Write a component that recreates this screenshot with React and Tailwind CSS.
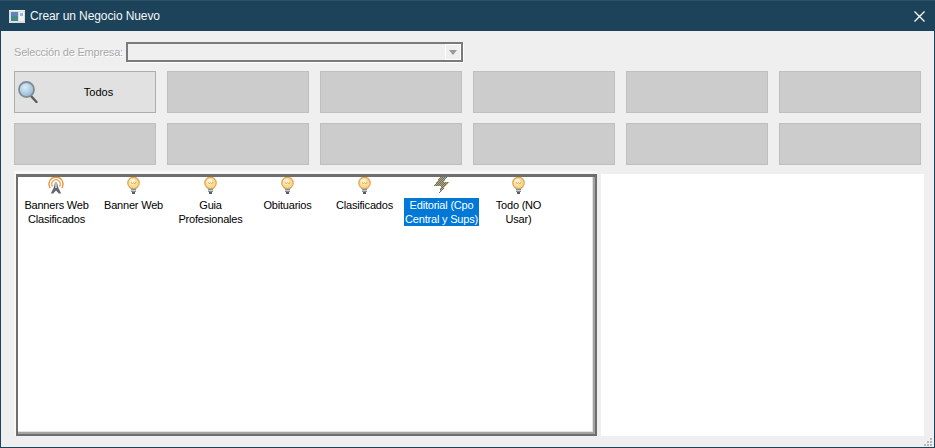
import React from "react";

const items = [
  { icon: "antenna", lines: ["Banners Web", "Clasificados"] },
  { icon: "bulb", lines: ["Banner Web"] },
  { icon: "bulb", lines: ["Guia", "Profesionales"] },
  { icon: "bulb", lines: ["Obituarios"] },
  { icon: "bulb", lines: ["Clasificados"] },
  { icon: "bolt", lines: ["Editorial (Cpo", "Central y Sups)"], selected: true },
  { icon: "bulb", lines: ["Todo (NO", "Usar)"] },
];

function WindowIcon() {
  return (
    <svg width="16" height="13" viewBox="0 0 16 13" shapeRendering="crispEdges">
      <rect width="16" height="13" fill="#dcdcdc" />
      <rect x="2" y="2" width="7" height="9" fill="#3e8c8c" />
      <rect x="2" y="2" width="7" height="4" fill="#5a86ba" />
      <rect x="10" y="2" width="5" height="9" fill="#f2f2f2" />
      <rect x="11" y="3" width="3" height="3" fill="#9ab8d4" />
      <rect width="16" height="1" fill="#f5f5f5" />
    </svg>
  );
}

function Bulb() {
  return (
    <svg width="13" height="17" viewBox="0 0 13 17">
      <circle cx="6.5" cy="6" r="5.7" fill="#fadb94" stroke="#e4a858" strokeWidth="1.300" />
      <circle cx="5.5" cy="4.800" r="3" fill="#fef0cb" />
      <path d="M4 5l1.200 2L6.500 5.500 7.800 7 9 5" fill="none" stroke="#d6a658" strokeWidth="0.800" />
      <rect x="3.500" y="11" width="6" height="1" fill="#d8a860" />
      <rect x="4" y="12" width="5" height="3" fill="#858e9b" />
      <rect x="4" y="13" width="5" height="1" fill="#c4cad2" />
      <rect x="5" y="15" width="3" height="2" fill="#555d68" />
    </svg>
  );
}

function Antenna() {
  return (
    <svg className="-ml-[2px]" width="16" height="17" viewBox="0 0 16 17">
      <path d="M2.200 11a7 7 0 1 1 11.600 0" fill="none" stroke="#ec9433" strokeWidth="1.400" />
      <path d="M4.600 9.500a4.200 4.200 0 1 1 6.800 0" fill="none" stroke="#f0a555" strokeWidth="1.300" />
      <path d="M7 5.500h2l1.200 5 3 6h-2.400L8 13.500 5.200 16.500H2.800l3-6z" fill="#66666e" />
      <rect x="7" y="6" width="2" height="5" fill="#b6b9c2" />
    </svg>
  );
}

function Bolt() {
  return (
    <svg width="15" height="17" viewBox="0 0 15 17" shapeRendering="crispEdges">
      <defs>
        <pattern id="dither" width="2" height="2" patternUnits="userSpaceOnUse">
          <rect width="2" height="2" fill="#f0a020" />
          <rect width="1" height="1" fill="#2f78c0" />
          <rect x="1" y="1" width="1" height="1" fill="#2f78c0" />
        </pattern>
      </defs>
      <polygon points="6,0 13,0 10,5 15,5 5,17 7,9 0,9" fill="url(#dither)" />
    </svg>
  );
}

function Magnifier() {
  return (
    <svg width="20" height="22" viewBox="0 0 20 22">
      <defs>
        <radialGradient id="lens" cx="0.4" cy="0.35" r="0.7">
          <stop offset="0" stopColor="#dcecf8" />
          <stop offset="1" stopColor="#8fb6d6" />
        </radialGradient>
      </defs>
      <path d="M13 15l5.500 6" stroke="#5a5d60" strokeWidth="2.400" strokeLinecap="round" />
      <circle cx="8.500" cy="8.500" r="7.500" fill="url(#lens)" stroke="#7f8c94" strokeWidth="1.800" />
    </svg>
  );
}

function ListIcon({ name }) {
  if (name === "antenna") return <Antenna />;
  if (name === "bolt") return <Bolt />;
  return <Bulb />;
}

function App() {
  return (
    <div className="w-[935px] h-[448px] flex flex-col bg-[#1c435a] border-t border-[#2b5068] font-['Liberation_Sans',sans-serif] text-[11px] leading-[14px] overflow-hidden">
      <div className="h-[30px] shrink-0 flex items-center pl-[9px] pr-[10px] text-[12px] text-[#f4f6f8]">
        <WindowIcon />
        <span className="ml-[5px] tracking-[-0.1px]">Crear un Negocio Nuevo</span>
        <svg className="ml-auto" width="11" height="11" viewBox="0 0 11 11">
          <path d="M0.500 0.500l10 10M10.500 0.500l-10 10" stroke="#ffffff" strokeWidth="1.300" />
        </svg>
      </div>

      <div className="relative flex-1 mx-px mb-px bg-[#efefef] px-[13px] pt-[11px]">
        <div className="flex items-center h-[20px]">
          <span className="w-[112px] whitespace-nowrap tracking-[-0.2px] text-[#a9a9a9] [text-shadow:1px_1px_0_#ffffff]">Selección de Empresa:</span>
          <div className="w-[337px] h-[20px] flex justify-end bg-[#efefef] border-2 border-[#7a7a7a] shadow-[1px_1px_0_#ffffff]">
            <div className="w-[16px] h-[16px] flex items-center justify-center border border-[#fdfdfd] bg-[#efefef]">
              <div className="w-0 h-0 border-x-[4px] border-x-transparent border-t-[5px] border-t-[#9a9a9a]" />
            </div>
          </div>
        </div>

        <div className="mt-[9px] grid grid-cols-6 gap-x-[11px] gap-y-[10px] w-[907px]">
          <button className="relative h-[42px] pl-[27px] bg-[#e1e1e1] border border-[#adadad] text-black">
            <span className="absolute left-[3px] top-[9px]">
              <Magnifier />
            </span>
            Todos
          </button>
          {Array.from({ length: 11 }).map((_, i) => (
            <div key={i} className="h-[42px] bg-[#cccccc] border border-[#bfbfbf]" />
          ))}
        </div>

        <div className="mt-[6px] flex items-stretch">
          <div className="shrink-0 w-[583px] h-[265px] border-l-2 border-t-[3px] border-[#f7f7f7]">
            <div className="h-full border-2 border-t-[3px] border-[#6e6e6e] bg-white">
              <div className="h-full border-r-2 border-b-2 border-[#a3a3a3]">
                <div className="h-full border-r border-b border-[#e2e2e2]">
                  <div className="flex">
                    {items.map((item, i) => (
                      <div key={i} className="w-[77px] flex flex-col items-center text-center text-black">
                        <div className="h-[17px] flex justify-center">
                          <ListIcon name={item.icon} />
                        </div>
                        <div
                          className={
                            "mt-[4px] w-[75px] whitespace-nowrap tracking-[-0.2px] " +
                            (item.selected ? "bg-[#0078d7] text-white" : "")
                          }
                        >
                          {item.lines.map((line) => (
                            <div key={line}>{line}</div>
                          ))}
                        </div>
                      </div>
                    ))}
                  </div>
                </div>
              </div>
            </div>
          </div>
          <div className="shrink-0 ml-[4px] mt-[3px] w-[323px] h-[262px] bg-white" />
        </div>

        <div className="absolute right-[2px] bottom-[1px] grid grid-cols-3 gap-px w-[8px]">
          <i /><i /><i className="w-[2px] h-[2px] bg-[#b8b8b8]" />
          <i /><i className="w-[2px] h-[2px] bg-[#b8b8b8]" /><i className="w-[2px] h-[2px] bg-[#b8b8b8]" />
          <i className="w-[2px] h-[2px] bg-[#b8b8b8]" /><i className="w-[2px] h-[2px] bg-[#b8b8b8]" /><i className="w-[2px] h-[2px] bg-[#b8b8b8]" />
        </div>
      </div>
    </div>
  );
}

export default App;
